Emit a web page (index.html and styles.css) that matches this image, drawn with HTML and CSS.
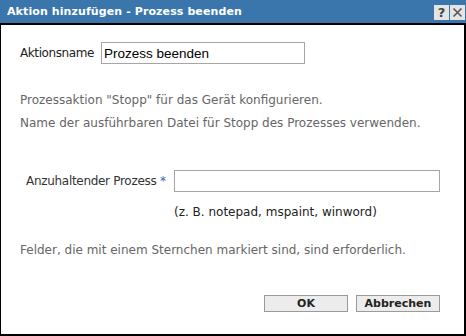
FILE: index.html
```html
<!DOCTYPE html>
<html lang="de">
<head>
    <meta charset="UTF-8">
    <title>Aktion hinzufügen - Prozess beenden</title>
    <link rel="stylesheet" href="styles.css">
</head>
<body>
    <div class="dialog">
        <div class="titlebar">
            <span class="title">Aktion hinzufügen - Prozess beenden</span>
            <div class="title-buttons">
                <span class="tbtn">?</span>
                <span class="tbtn">
                    <svg width="11" height="11" viewBox="0 0 11 11">
                        <path d="M1.5 1.5 L9.5 9.5 M9.5 1.5 L1.5 9.5" stroke="#555" stroke-width="1.6" fill="none"/>
                    </svg>
                </span>
            </div>
        </div>
        <div class="content">
            <div class="name-row">
                <label class="name-label">Aktionsname</label>
                <input type="text" class="name-input" value="Prozess beenden">
            </div>

            <div class="desc">
                <p>Prozessaktion "Stopp" für das Gerät konfigurieren.</p>
                <p>Name der ausführbaren Datei für Stopp des Prozesses verwenden.</p>
            </div>

            <div class="process-grid">
                <label class="process-label">Anzuhaltender Prozess <span class="req">*</span></label>
                <input type="text" class="process-input">
                <span></span>
                <span class="hint">(z. B. notepad, mspaint, winword)</span>
            </div>

            <p class="required-note">Felder, die mit einem Sternchen markiert sind, sind erforderlich.</p>

            <div class="actions">
                <button class="btn">OK</button>
                <button class="btn">Abbrechen</button>
            </div>
        </div>
    </div>
</body>
</html>
```

FILE: styles.css
```css
body {
    margin: 0;
    font-family: 'DejaVu Sans', Verdana, sans-serif;
    font-size: 12px;
    background: #fff;
}
.dialog {
    width: 466px;
    height: 336px;
    display: flex;
    flex-direction: column;
}
.titlebar {
    height: 23px;
    background: #3a76ab;
    border-bottom: 2px solid #000;
    display: flex;
    align-items: center;
    justify-content: space-between;
    padding-left: 7px;
    padding-right: 1px;
}
.title {
    color: #fff;
    font-weight: bold;
    font-size: 11px;
    letter-spacing: 0.1px;
}
.title-buttons {
    display: flex;
    gap: 1px;
    margin-top: 1px;
}
.tbtn {
    width: 15px;
    height: 15px;
    background: #e4e4e4;
    color: #444;
    font-weight: bold;
    font-size: 13px;
    display: flex;
    align-items: center;
    justify-content: center;
}
.content {
    flex: 1;
    border-left: 1px solid #000;
    border-right: 2px solid #000;
    border-bottom: 2px solid #000;
    padding: 17px 24px 22px 19px;
    display: flex;
    flex-direction: column;
}
.name-row {
    display: flex;
    align-items: center;
    gap: 7px;
    color: #222;
}
.name-label {
    letter-spacing: -0.4px;
}
input {
    box-sizing: border-box;
    height: 22px;
    border: 1px solid #a6a6a6;
    padding: 0 2px;
    font-family: 'Liberation Sans', Arial, sans-serif;
    font-size: 13.5px;
    color: #000;
    margin: 0;
}
.name-input {
    width: 204px;
}
.desc {
    margin-top: 25px;
    color: #666;
}
.desc p {
    margin: 0;
    line-height: 23px;
}
.process-grid {
    margin-top: 35px;
    display: grid;
    grid-template-columns: 154px 266px;
    align-items: center;
    row-gap: 10px;
}
.process-label {
    padding-left: 6px;
    color: #333;
    letter-spacing: -0.3px;
}
.req {
    color: #3366bb;
}
.hint {
    color: #222;
    line-height: 20px;
}
.required-note {
    margin: 18px 0 0 0;
    line-height: 20px;
    color: #666;
}
.actions {
    margin-top: auto;
    display: flex;
    justify-content: flex-end;
    gap: 8px;
}
.btn {
    width: 84px;
    height: 17px;
    padding: 0;
    background: #ececec;
    border: 1px solid #9a9a9a;
    font-family: 'DejaVu Sans', Verdana, sans-serif;
    font-size: 11px;
    font-weight: bold;
    color: #222;
    line-height: 15px;
}
```
